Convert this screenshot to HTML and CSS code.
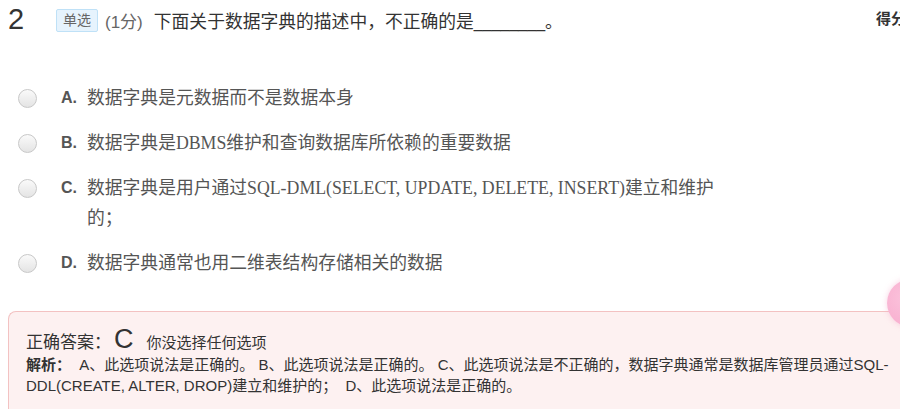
FILE: index.html
```html
<!DOCTYPE html>
<html lang="zh">
<head>
<meta charset="utf-8">
<link rel="stylesheet" href="styles.css">
</head>
<body>
<div class="page">
  <div class="question-head">
    <span class="q-num">2</span>
    <span class="badge">单选</span>
    <span class="score">(1分)</span>
    <span class="q-text">下面关于数据字典的描述中，不正确的是<span class="blank">________</span>。</span>
    <span class="got">得分</span>
  </div>
  <ul class="options">
    <li class="option"><span class="radio"></span><span class="letter">A.</span><span class="opt-text">数据字典是元数据而不是数据本身</span></li>
    <li class="option"><span class="radio"></span><span class="letter">B.</span><span class="opt-text">数据字典是DBMS维护和查询数据库所依赖的重要数据</span></li>
    <li class="option"><span class="radio"></span><span class="letter">C.</span><span class="opt-text">数据字典是用户通过SQL-DML(SELECT, UPDATE, DELETE, INSERT)建立和维护的；</span></li>
    <li class="option"><span class="radio"></span><span class="letter">D.</span><span class="opt-text">数据字典通常也用二维表结构存储相关的数据</span></li>
  </ul>
  <div class="answer">
    <div class="answer-title"><span class="label">正确答案：</span><span class="right">C</span><span class="mine">你没选择任何选项</span></div>
    <div class="analysis"><b>解析：</b>&nbsp; A、此选项说法是正确的。 B、此选项说法是正确的。 C、此选项说法是不正确的，数据字典通常是数据库管理员通过SQL-DDL(CREATE, ALTER, DROP)建立和维护的；&nbsp; D、此选项说法是正确的。</div>
  </div>
  <div class="float-ball"></div>
</div>
</body>
</html>
```
FILE: styles.css
```css
html, body {
  margin: 0;
  padding: 0;
  overflow: hidden;
  background: #fff;
}
body {
  width: 900px;
  height: 409px;
  font-family: "Liberation Sans", "Noto Sans CJK SC", sans-serif;
  color: #333;
}
.page {
  position: relative;
  width: 930px;
  padding: 0 0 0 8px;
}
.question-head {
  display: flex;
  align-items: center;
  height: 40px;
  white-space: nowrap;
}
.q-num {
  font-size: 29px;
  width: 48px;
  color: #333;
  line-height: 1;
  margin-top: -1px;
}
.badge {
  font-size: 14px;
  color: #666;
  background: #e6f3fd;
  border: 1px solid #bfe1f7;
  border-radius: 2px;
  padding: 0 6px;
  line-height: 21px;
  margin-right: 7px;
}
.score {
  font-size: 17px;
  color: #666;
  margin-right: 11px;
}
.q-text {
  font-size: 17.8px;
  color: #333;
}
.blank {
  font-family: "Liberation Sans", sans-serif;
  font-size: 16px;
}
.got {
  position: absolute;
  left: 876px;
  top: 7px;
  font-size: 15px;
  font-weight: bold;
  color: #333;
}
.options {
  list-style: none;
  margin: 36px 0 0 0;
  padding: 0 0 0 10px;
}
.option {
  display: flex;
  align-items: flex-start;
  padding: 7px 0 8px;
  line-height: 30px;
}
.radio {
  flex: none;
  width: 17px;
  height: 17px;
  margin-top: 6px;
  border: 1px solid #c8c8c8;
  border-radius: 50%;
  background: linear-gradient(#fafafa, #e4e4e4);
  margin-right: 24px;
}
.letter {
  flex: none;
  width: 26px;
  font-size: 16px;
  font-weight: bold;
  color: #555;
}
.opt-text {
  width: 640px;
  font-family: "Liberation Serif", "Noto Sans CJK SC", serif;
  font-size: 17.8px;
  color: #555;
}
.answer {
  margin-top: 25px;
  border: 1px solid #f3c2c2;
  border-right: none;
  border-radius: 8px 0 0 8px;
  background: #fdf1f1;
  padding: 12px 30px 20px 17px;
}
.answer-title {
  display: flex;
  align-items: baseline;
  height: 30px;
  line-height: 30px;
}
.label {
  font-size: 17px;
  color: #333;
}
.right {
  font-size: 27px;
  color: #333;
  margin: 0 13px 0 3px;
}
.mine {
  font-size: 15px;
  color: #333;
}
.analysis {
  font-size: 15px;
  line-height: 21px;
  color: #333;
  width: 880px;
}
.analysis b {
  font-weight: bold;
}
.float-ball {
  position: absolute;
  left: 887px;
  top: 279px;
  width: 48px;
  height: 48px;
  border-radius: 50%;
  background: radial-gradient(circle at 40% 40%, #fbc3dc, #f7a8cb);
  box-shadow: 0 0 6px rgba(240, 150, 190, 0.4);
}
```
